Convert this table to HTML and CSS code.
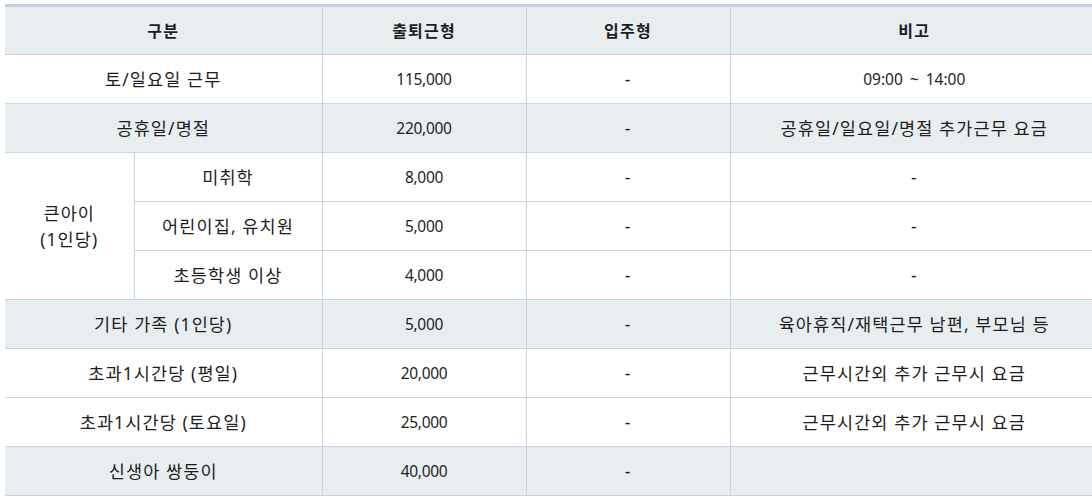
FILE: index.html
```html
<!DOCTYPE html>
<html lang="ko">
<head>
<meta charset="utf-8">
<link rel="stylesheet" href="styles.css">
</head>
<body>
<div class="wrap">
<table class="fee">
  <colgroup>
    <col class="c-a"><col class="c-b"><col class="c-2"><col class="c-3"><col class="c-4">
  </colgroup>
  <thead>
    <tr><th colspan="2">구분</th><th>출퇴근형</th><th>입주형</th><th>비고</th></tr>
  </thead>
  <tbody>
    <tr><td colspan="2">토/일요일 근무</td><td class="num">115,000</td><td>-</td><td class="time">09:00 ~ 14:00</td></tr>
    <tr class="alt"><td colspan="2">공휴일/명절</td><td class="num">220,000</td><td>-</td><td>공휴일/일요일/명절 추가근무 요금</td></tr>
    <tr><td rowspan="3">큰아이<br>(1인당)</td><td>미취학</td><td class="num">8,000</td><td>-</td><td>-</td></tr>
    <tr><td>어린이집, 유치원</td><td class="num">5,000</td><td>-</td><td>-</td></tr>
    <tr><td>초등학생 이상</td><td class="num">4,000</td><td>-</td><td>-</td></tr>
    <tr class="alt"><td colspan="2">기타 가족 (1인당)</td><td class="num">5,000</td><td>-</td><td>육아휴직/재택근무 남편, 부모님 등</td></tr>
    <tr><td colspan="2">초과1시간당 (평일)</td><td class="num">20,000</td><td>-</td><td>근무시간외 추가 근무시 요금</td></tr>
    <tr><td colspan="2">초과1시간당 (토요일)</td><td class="num">25,000</td><td>-</td><td>근무시간외 추가 근무시 요금</td></tr>
    <tr class="alt"><td colspan="2">신생아 쌍둥이</td><td class="num">40,000</td><td>-</td><td></td></tr>
  </tbody>
</table>
</div>
</body>
</html>
```
FILE: styles.css
```css
html, body {
  margin: 0;
  padding: 0;
  background: #ffffff;
  overflow: hidden;
}
.wrap {
  padding: 4px 0 0 5px;
  width: 1200px;
}
.fee {
  border-collapse: collapse;
  table-layout: fixed;
  width: 1094px;
  border-top: 3px solid #c3d0e2;
  font-family: "Noto Sans", "Noto Sans CJK KR", sans-serif;
  font-size: 17.5px;
  color: #1e1e1e;
}
.c-a { width: 129px; }
.c-b { width: 188px; }
.c-2 { width: 204px; }
.c-3 { width: 204px; }
.c-4 { width: auto; }
.fee th, .fee td {
  height: 48px;
  padding: 0;
  border: 1px solid #c9d4e2;
  text-align: center;
  vertical-align: middle;
  line-height: 26px;
  letter-spacing: 1.1px;
}
.fee th {
  background: #e8eef0;
  font-weight: bold;
  font-size: 16px;
  height: 47px;
  letter-spacing: 1.2px;
}
.fee td.num {
  font-size: 15.5px;
  letter-spacing: -0.3px;
}
.fee td.time {
  font-size: 15.5px;
  letter-spacing: 0;
  word-spacing: 3px;
}
.fee thead tr th { border-top: none; }
.fee tr > :first-child { border-left: none; }
.fee .alt td { background: #e8eef0; }
```
